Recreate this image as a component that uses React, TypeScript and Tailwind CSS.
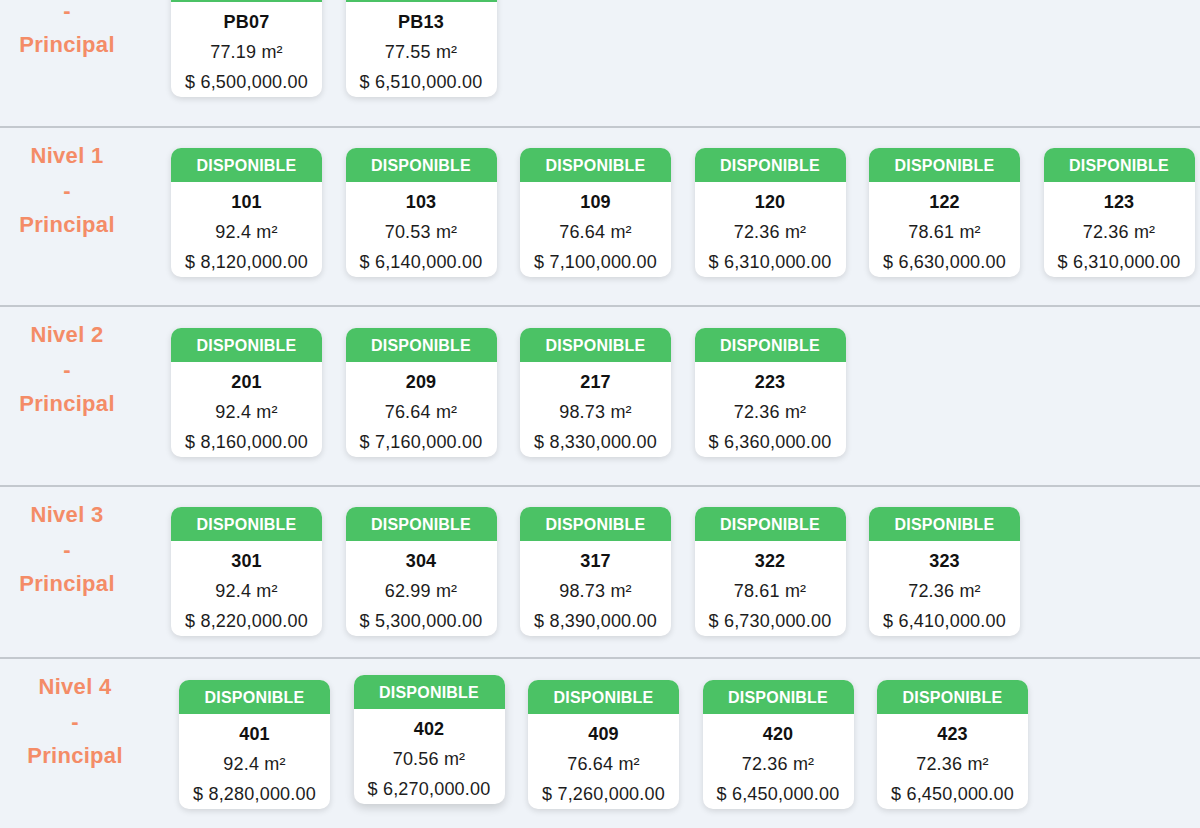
import React from "react";

type Unit = { id: string; area: string; price: string; hover?: boolean };
type Section = { label: string; units: Unit[]; h: string; pt: string; shift?: boolean; top?: boolean };

const sections: Section[] = [
  {
    label: "Planta Baja",
    h: "h-[180px]",
    pt: "pt-[20px]",
    top: true,
    units: [
      { id: "PB07", area: "77.19", price: "6,500,000.00" },
      { id: "PB13", area: "77.55", price: "6,510,000.00" },
    ],
  },
  {
    label: "Nivel 1",
    h: "h-[179px]",
    pt: "pt-[20px]",
    units: [
      { id: "101", area: "92.4", price: "8,120,000.00" },
      { id: "103", area: "70.53", price: "6,140,000.00" },
      { id: "109", area: "76.64", price: "7,100,000.00" },
      { id: "120", area: "72.36", price: "6,310,000.00" },
      { id: "122", area: "78.61", price: "6,630,000.00" },
      { id: "123", area: "72.36", price: "6,310,000.00" },
    ],
  },
  {
    label: "Nivel 2",
    h: "h-[180px]",
    pt: "pt-[21px]",
    units: [
      { id: "201", area: "92.4", price: "8,160,000.00" },
      { id: "209", area: "76.64", price: "7,160,000.00" },
      { id: "217", area: "98.73", price: "8,330,000.00" },
      { id: "223", area: "72.36", price: "6,360,000.00" },
    ],
  },
  {
    label: "Nivel 3",
    h: "h-[172px]",
    pt: "pt-[20px]",
    units: [
      { id: "301", area: "92.4", price: "8,220,000.00" },
      { id: "304", area: "62.99", price: "5,300,000.00" },
      { id: "317", area: "98.73", price: "8,390,000.00" },
      { id: "322", area: "78.61", price: "6,730,000.00" },
      { id: "323", area: "72.36", price: "6,410,000.00" },
    ],
  },
  {
    label: "Nivel 4",
    h: "h-[180px]",
    pt: "pt-[21px]",
    shift: true,
    units: [
      { id: "401", area: "92.4", price: "8,280,000.00" },
      { id: "402", area: "70.56", price: "6,270,000.00", hover: true },
      { id: "409", area: "76.64", price: "7,260,000.00" },
      { id: "420", area: "72.36", price: "6,450,000.00" },
      { id: "423", area: "72.36", price: "6,450,000.00" },
    ],
  },
];

function Card({ u }: { u: Unit }) {
  return (
    <div
      className={`w-[151px] shrink-0 rounded-[10px] bg-white overflow-hidden ${
        u.hover
          ? "-translate-y-[5px] shadow-[0_4px_10px_rgba(0,0,0,0.16)]"
          : "shadow-[0_2px_6px_rgba(0,0,0,0.13)]"
      }`}
    >
      <div className="h-[34px] pt-[2px] bg-[#4bc265] flex items-center justify-center text-white font-bold text-[16px] tracking-[0.2px] leading-none">
        DISPONIBLE
      </div>
      <div className="pt-[5px] text-center text-[18px] tracking-[0.2px] leading-[30px] text-[#1c1c1c]">
        <div className="font-bold text-[#111]">{u.id}</div>
        <div>{u.area} m²</div>
        <div>$ {u.price}</div>
      </div>
    </div>
  );
}

export default function App() {
  return (
    <div
      className="w-[1200px] h-[828px] overflow-hidden bg-[#eff3f8]"
      style={{ fontFamily: '"Liberation Sans", Arial, sans-serif' }}
    >
      {sections.map((s) => (
        <div
          key={s.label}
          className={`${s.h} border-b-2 border-[#c3c8ce] flex items-start ${s.top ? "-mt-[52px]" : ""} ${
            s.shift ? "pl-[8px]" : ""
          }`}
        >
          <div className="w-[134px] shrink-0 pt-[11px] text-center text-[22px] font-bold tracking-[0.3px] leading-[34.5px] text-[#f48c67]">
            <div>{s.label}</div>
            <div>-</div>
            <div>Principal</div>
          </div>
          <div className={`ml-[37px] ${s.pt} flex gap-x-[23.5px]`}>
            {s.units.map((u) => (
              <Card key={u.id} u={u} />
            ))}
          </div>
        </div>
      ))}
    </div>
  );
}
